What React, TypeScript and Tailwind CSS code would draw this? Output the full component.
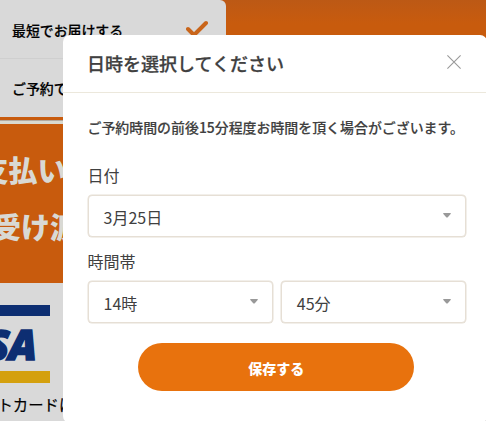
import { useState } from 'react';

function SelectBox({ value }: { value: string }) {
  return (
    <button
      type="button"
      className="flex h-[42px] w-full items-center justify-between rounded-[4px] border border-[#e6dfd5] bg-white pr-[14px] pl-[15px] text-left text-[16px] shadow-[0_0_0_0.5px_#e6dfd5]"
    >
      <span className="pt-0.5 leading-6">{value}</span>
      <svg className="mb-px h-[5px] w-2" viewBox="0 0 8 5" fill="#999">
        <path d="M0.7 0h6.6q1 0 0.3 0.9L5 3.9q-1 1-2 0L0.4 0.9Q-0.3 0 0.7 0z" />
      </svg>
    </button>
  );
}

function OrderPage() {
  return (
    <div className="flex h-full flex-col">
      <div className="h-[117px] bg-gradient-to-b from-[#bc5915] to-[#c85b0d] to-20%">
        <div className="h-full w-[226px] rounded-tr-[6px] bg-[#d9d9d9] text-[13.9px] font-medium text-black [-webkit-text-stroke:0.2px]">
          <div className="flex h-[59px] items-center justify-between border-b border-[#cfcfcf] pr-[18px] pl-3">
            <span className="pt-0.5">最短でお届けする</span>
            <svg className="h-[18px] w-[22px]" viewBox="0 0 22 18" fill="none" stroke="#c9651a" strokeWidth="4">
              <path d="M2 9l6 6L20 3" strokeLinecap="round" strokeLinejoin="round" />
            </svg>
          </div>
          <div className="flex h-[58px] items-center pl-3">
            <span>ご予約でお届けする</span>
          </div>
        </div>
      </div>
      <div className="h-[3px] bg-[#c85b0d]" />
      <div className="h-1 border-t border-[#b3a99e] bg-[#d9d9cf]" />
      <div className="h-[159px] overflow-hidden bg-[#c85b0d] pt-[17px] text-[29px] leading-[57px] font-black whitespace-nowrap text-[#d9d9d4]">
        <p className="-ml-[49.5px]">お支払い方法</p>
        <p className="-ml-[8px]">受け渡し</p>
      </div>
      <div className="flex-1 overflow-hidden bg-[#d9d9d9] pt-[22px]">
        <div className="h-[11px] w-[50px] bg-[#0d2e72]" />
        <div className="flex h-[55px] w-[50px] items-center justify-end pr-[14px]">
          <span className="font-['Open_Sans'] text-[42px] font-extrabold tracking-[-1px] text-[#0d2e72] italic [-webkit-text-stroke:1.6px]">VISA</span>
        </div>
        <div className="h-3 w-[50px] bg-[#d4a00e]" />
        <p className="-ml-[18px] pt-[9px] text-[15.4px] leading-6 whitespace-nowrap text-black [-webkit-text-stroke:0.2px]">ットカードは</p>
      </div>
    </div>
  );
}

export default function App() {
  const [open, setOpen] = useState(true);

  return (
    <div className="relative h-[421px] w-[486px] overflow-hidden font-['Noto_Sans_CJK_JP',sans-serif]">
      <OrderPage />
      {open && (
        <div className="absolute top-[34.5px] left-[63px] h-[388px] w-[424px] rounded-[7px] bg-white text-[#404040]">
          <header className="flex h-[58px] items-center justify-between border-b border-[#ece8dc] pr-[26px] pl-6">
            <h1 className="text-[18px] leading-6 font-medium [-webkit-text-stroke:0.25px]">日時を選択してください</h1>
            <button type="button" aria-label="閉じる" onClick={() => setOpen(false)}>
              <svg className="mb-0.5 h-[14px] w-[14px]" viewBox="0 0 14 14" stroke="#999" strokeWidth="1.1">
                <path d="M0.4 0.4l13.2 13.2M13.6 0.4L0.4 13.6" />
              </svg>
            </button>
          </header>
          <div className="pt-[22.5px] pr-[21px] pl-[24.5px]">
            <p className="text-[13.93px] leading-6 font-medium whitespace-nowrap [-webkit-text-stroke:0.15px]">ご予約時間の前後15分程度お時間を頂く場合がございます。</p>
            <p className="mt-6 text-[16px] leading-6">日付</p>
            <div className="mt-2">
              <SelectBox value="3月25日" />
            </div>
            <p className="mt-3 text-[16px] leading-6">時間帯</p>
            <div className="mt-2 grid grid-cols-2 gap-2">
              <SelectBox value="14時" />
              <SelectBox value="45分" />
            </div>
            <div className="mt-5 flex justify-center pr-px">
              <button
                type="button"
                className="h-12 w-[276px] rounded-full bg-[#e8720d] pt-0.5 text-[14px] font-black text-white"
                onClick={() => setOpen(false)}
              >
                保存する
              </button>
            </div>
          </div>
        </div>
      )}
    </div>
  );
}
